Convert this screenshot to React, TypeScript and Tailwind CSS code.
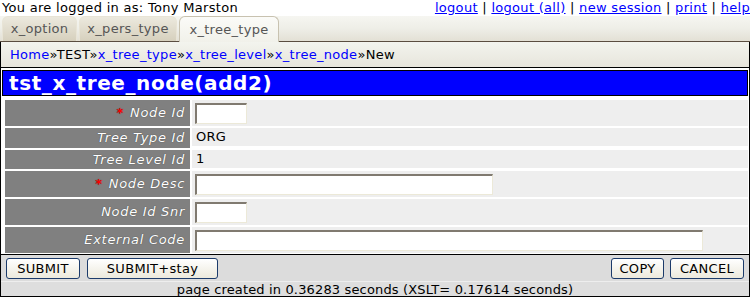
import React from 'react';

const font = "font-['DejaVu_Sans',Verdana,sans-serif]";

const tabs = [
  { label: 'x_option', w: 'w-[75px]', active: false },
  { label: 'x_pers_type', w: 'w-[98px]', active: false },
  { label: 'x_tree_type', w: 'w-[100px]', active: true },
];

const Label: React.FC<{ text: string; required?: boolean }> = ({ text, required }) => (
  <div className="bg-[#808080] flex items-center justify-end pr-[5px] text-white italic tracking-[0.7px] [text-shadow:0_0_1px_#333]">
    {required && <span className="text-[#ff0000] not-italic mr-[6px] font-bold">*</span>}
    <span>{text}</span>
  </div>
);

const Input: React.FC<{ w: string }> = ({ w }) => (
  <input
    type="text"
    className={`${w} h-[21px] bg-white border-t-2 border-l-2 border-r border-b border-t-[#807a70] border-l-[#807a70] border-r-[#ece9d8] border-b-[#ece9d8] outline-none`}
  />
);

const Btn: React.FC<{ text: string; w: string }> = ({ text, w }) => (
  <button className={`${w} h-[21px] rounded-[3px] border border-[#1c3b6b] bg-gradient-to-b from-white to-[#ece9dc] text-[13px] text-black leading-none`}>
    {text}
  </button>
);

const App: React.FC = () => {
  return (
    <div className={`${font} w-[752px] h-[299px] bg-white text-[13px] tracking-[0.3px] text-black overflow-hidden`}>
      {/* header line */}
      <div className="h-[16px] flex justify-between items-start pl-[2px] pr-[2px] leading-[16px] whitespace-nowrap">
        <span>You are logged in as: Tony Marston</span>
        <span className="text-[#0000ff]">
          <a className="underline">logout</a>
          <span className="text-black"> | </span>
          <a className="underline">logout (all)</a>
          <span className="text-black"> | </span>
          <a className="underline">new session</a>
          <span className="text-black"> | </span>
          <a className="underline">print</a>
          <span className="text-black"> | </span>
          <a className="underline">help</a>
        </span>
      </div>

      {/* tab bar */}
      <div className="h-[26px] w-[750px] pt-[1px] pl-[2px] flex gap-[2px] items-end bg-[linear-gradient(#f6f6f1,#eeeee7_50%,#e3e0d5)] border-b border-[#5a4d40] relative">
        {tabs.map((t) => (
          <div
            key={t.label}
            className={`${t.w} h-[25px] rounded-t-[6px] flex items-center justify-center text-[#555] ${
              t.active
                ? 'bg-[linear-gradient(#fbfbf8,#f1f1ea)] border border-b-0 border-[#c8c2b0] h-[26px] -mb-[1px] z-10'
                : 'bg-[linear-gradient(#ece9de,#d6d0bd)] border-t border-x border-[#e8e4d6]'
            }`}
          >
            {t.label}
          </div>
        ))}
      </div>

      {/* breadcrumb */}
      <div className="w-[750px] h-[26px] border-x border-b border-black bg-[linear-gradient(#f3f4ee,#e7e5dc)] flex items-center pl-[9px] pt-[1px] whitespace-nowrap">
        <span className="text-[#0000ff]">Home</span>
        <span>»TEST»</span>
        <span className="text-[#0000ff]">x_tree_type</span>
        <span>»</span>
        <span className="text-[#0000ff]">x_tree_level</span>
        <span>»</span>
        <span className="text-[#0000ff]">x_tree_node</span>
        <span>»New</span>
      </div>

      {/* main */}
      <div className="w-[750px] h-[229px] border-x border-b border-black flex flex-col">
        <div className="mx-[1px] mt-[2px] h-[26px] border border-black bg-[#0000ff] text-white font-bold text-[20px] tracking-[0.6px] flex items-center pl-[6px] leading-none">
          tst_x_tree_node(add2)
        </div>

        <div className="mt-[4px] ml-[4px] mr-[1px] grid grid-cols-[185px_1fr] gap-[2px]">
          <Label text="Node Id" required />
          <div className="bg-[#eeeeee] h-[26px] flex items-center pl-[3px]"><Input w="w-[52px]" /></div>

          <Label text="Tree Type Id" />
          <div className="bg-[#eeeeee] h-[18px] flex items-center pl-[4px]">ORG</div>

          <Label text="Tree Level Id" />
          <div className="bg-[#eeeeee] h-[18px] flex items-center pl-[4px]">1</div>

          <Label text="Node Desc" required />
          <div className="bg-[#eeeeee] h-[26px] flex items-center pl-[3px]"><Input w="w-[298px]" /></div>

          <Label text="Node Id Snr" />
          <div className="bg-[#eeeeee] h-[26px] flex items-center pl-[3px]"><Input w="w-[52px]" /></div>

          <Label text="External Code" />
          <div className="bg-[#eeeeee] h-[26px] flex items-center pl-[3px]"><Input w="w-[508px]" /></div>
        </div>

        <div className="mt-[1px] border-t border-black h-[27px] bg-[#dcdcdc] flex items-center justify-between px-[5px]">
          <div className="flex gap-[7px]">
            <Btn text="SUBMIT" w="w-[74px]" />
            <Btn text="SUBMIT+stay" w="w-[131px]" />
          </div>
          <div className="flex gap-[6px]">
            <Btn text="COPY" w="w-[53px]" />
            <Btn text="CANCEL" w="w-[74px]" />
          </div>
        </div>
        <div className="border-t border-[#eeeeee] flex-1 bg-[#dedede] flex items-center justify-center leading-none tracking-[0.15px]">
          page created in 0.36283 seconds (XSLT= 0.17614 seconds)
        </div>
      </div>
    </div>
  );
};

export default App;
